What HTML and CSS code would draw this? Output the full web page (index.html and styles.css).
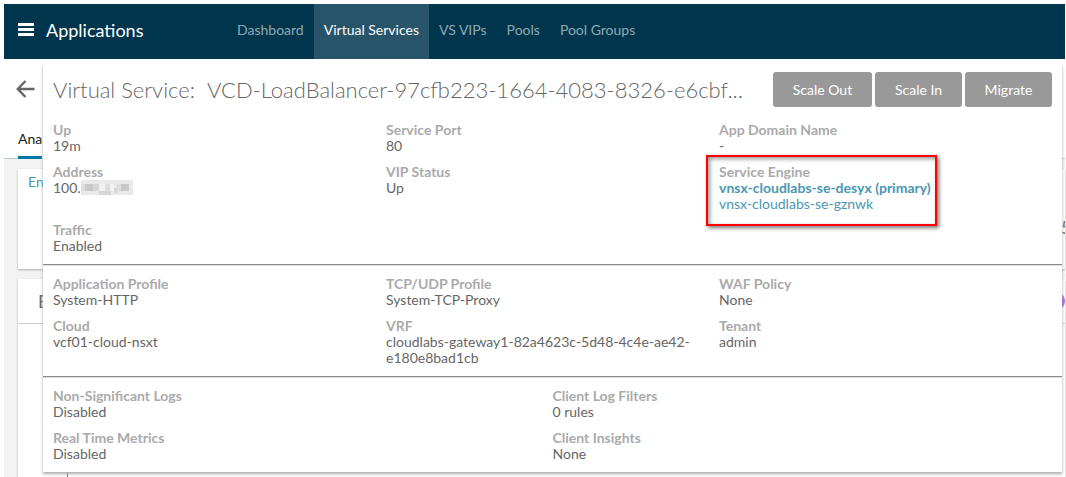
FILE: index.html
```html
<!DOCTYPE html>
<html lang="en">
<head>
<meta charset="utf-8">
<title>Applications</title>
<link rel="stylesheet" href="styles.css">
</head>
<body>
<div class="app">
  <header class="topbar">
    <button class="menu" aria-label="Menu">
      <svg width="16" height="13" viewBox="0 0 16 13" fill="#fff"><path d="M0 0h16v3H0zM0 5h16v3H0zM0 10h16v3H0z"/></svg>
    </button>
    <h1 class="brand">Applications</h1>
    <nav class="nav">
      <a class="nav-link" href="#">Dashboard</a>
      <a class="nav-link active" href="#">Virtual Services</a>
      <a class="nav-link" href="#">VS VIPs</a>
      <a class="nav-link" href="#">Pools</a>
      <a class="nav-link" href="#">Pool Groups</a>
    </nav>
  </header>

  <div class="page">
    <div class="page-head">
      <button class="back" aria-label="Back">
        <svg width="19" height="18" viewBox="0 0 19 18" fill="none" stroke="#666" stroke-width="2.400"><path d="M18.500 9H2M9.500 1L1.800 9l7.700 8"/></svg>
      </button>
      <div class="tabs"><a class="tab" href="#">Ana</a></div>
    </div>
    <main class="cards">
      <section class="card timing">
        <a class="card-link" href="#">En</a>
        <span class="metric">5</span>
      </section>
      <section class="card chart">
        <div class="chart-head"><span>E</span><span class="dot"></span></div>
        <div class="plot"></div>
      </section>
    </main>

    <div class="popup">
      <div class="popup-head">
        <h2 class="title"><span>Virtual Service:</span><span>VCD-LoadBalancer-97cfb223-1664-4083-8326-e6cbf...</span></h2>
        <div class="actions">
          <button class="btn wide">Scale Out</button>
          <button class="btn">Scale In</button>
          <button class="btn">Migrate</button>
        </div>
      </div>
      <dl class="group">
        <div class="field"><dt>Up</dt><dd>19m</dd></div>
        <div class="field"><dt>Service Port</dt><dd>80</dd></div>
        <div class="field"><dt>App Domain Name</dt><dd>-</dd></div>
        <div class="field"><dt>Address</dt><dd class="address">100.<svg width="52" height="15" viewBox="0 0 52 15" shape-rendering="crispEdges"><path fill="#e9e9e9" d="M0 0h52v15H0z"/><path fill="#c9c9c9" d="M4 4h8v7H4zM40 4h8v7h-8z"/><path fill="#d6d6d6" d="M12 4h6v7h-6zM18 11h12v4H18zM33 8h4v5h-4z"/><path fill="#dedede" d="M0 4h4v7H0zM24 4h5v7h-5zM36 4h4v7h-4z"/><path fill="#f2f2f2" d="M18 4h6v7h-6zM29 4h4v7h-4z"/></svg></dd></div>
        <div class="field"><dt>VIP Status</dt><dd>Up</dd></div>
        <div class="field"><div class="marked"><dt>Service Engine</dt><dd><a class="primary" href="#">vnsx-cloudlabs-se-desyx (primary)</a></dd><dd><a href="#">vnsx-cloudlabs-se-gznwk</a></dd></div></div>
        <div class="field"><dt>Traffic</dt><dd>Enabled</dd></div>
      </dl>
      <dl class="group">
        <div class="field"><dt>Application Profile</dt><dd>System-HTTP</dd></div>
        <div class="field"><dt>TCP/UDP Profile</dt><dd>System-TCP-Proxy</dd></div>
        <div class="field"><dt>WAF Policy</dt><dd>None</dd></div>
        <div class="field"><dt>Cloud</dt><dd>vcf01-cloud-nsxt</dd></div>
        <div class="field"><dt>VRF</dt><dd>cloudlabs-gateway1-82a4623c-5d48-4c4e-ae42-e180e8bad1cb</dd></div>
        <div class="field"><dt>Tenant</dt><dd>admin</dd></div>
      </dl>
      <dl class="group halves">
        <div class="field"><dt>Non-Significant Logs</dt><dd>Disabled</dd></div>
        <div class="field"><dt>Client Log Filters</dt><dd>0 rules</dd></div>
        <div class="field"><dt>Real Time Metrics</dt><dd>Disabled</dd></div>
        <div class="field"><dt>Client Insights</dt><dd>None</dd></div>
      </dl>
    </div>
  </div>
</div>
</body>
</html>
```
FILE: styles.css
```css
* { box-sizing: border-box; }
html, body { height: 100%; }
body {
  margin: 0;
  background: #fff;
  color: #666;
  font: 14px/16px Lato, "Open Sans", sans-serif;
}
h1, h2, dl, dd { margin: 0; font-weight: 400; }
button { border: 0; padding: 0; background: none; font: inherit; cursor: pointer; }
a { color: #4a97b2; text-decoration: none; }
svg { display: block; }

.app {
  display: flex;
  flex-direction: column;
  height: 100%;
  padding: 4px 1px 0 4px;
  overflow: hidden;
}

.topbar {
  display: flex;
  align-items: stretch;
  flex: none;
  min-height: 55px;
  padding: 0 14px 4px;
  background: #00364d;
}
.menu { align-self: center; }
.brand { align-self: center; width: 181px; margin-left: 12px; color: #fff; font-size: 18px; line-height: 24px; }
.nav { display: flex; margin-bottom: -4px; }
.nav-link { display: flex; align-items: center; padding: 0 10px 4px; color: #90a9b4; }
.nav-link.active { background: #285469; color: #fff; }

.page { position: relative; display: flex; flex-direction: column; flex: 1; }
.page-head { border-bottom: 1px solid #b9cbcb; }
.back { display: block; margin: 21px 0 0 12px; }
.tabs { display: flex; padding: 31px 14px 0; }
.tab { padding: 2px 0 9px; margin-bottom: -1px; border-bottom: 3px solid #0077a8; color: #222; }

.cards { display: flex; flex-direction: column; flex: 1; gap: 10px; padding: 10px 0 0 14px; background: #f3f3f3; }
.card { background: #fff; box-shadow: 0 1px 2px #aaa; }
.timing { display: flex; justify-content: space-between; height: 100px; padding: 5px 0 0 10px; }
.metric { width: 4px; overflow: hidden; margin-top: 43px; font-size: 18px; line-height: 20px; }
.chart { flex: 1; display: flex; flex-direction: column; }
.chart-head { display: flex; align-items: center; justify-content: space-between; height: 45px; padding-left: 20px; border-bottom: 1px solid #ccc; font-size: 18px; }
.dot { width: 20px; height: 20px; border-radius: 10px; background: #a66ae0; }
.plot { flex: 1; margin-left: 49px; border-left: 1px solid #777; }

.popup {
  position: absolute;
  top: 5px;
  left: 39px;
  right: 3px;
  background: #fff;
  box-shadow: 0 2px 3px #aaa;
}
.popup-head { display: flex; align-items: center; justify-content: space-between; gap: 10px; padding: 8px 10px 5px; }
.title { display: flex; gap: 12px; min-width: 0; font-size: 22px; line-height: 30px; font-weight: 300; white-space: nowrap; }
.actions { display: flex; gap: 3px; }
.btn { width: 87px; height: 35px; border-radius: 3px; background: #999; color: #fff; }
.btn.wide { width: 99px; }

.group { display: grid; grid-template-columns: repeat(3, 1fr); padding: 10px 10px 0; }
.group + .group { padding-top: 11px; border-top: 1px solid #8c8c8c; box-shadow: inset 0 1px #ddd; }
.group.halves { grid-template-columns: repeat(2, 1fr); }
.field { padding: 0 20px 10px 0; }
dt { color: #aaa; font-weight: 700; }
.address { display: flex; }
.primary { font-weight: 700; }
.marked { position: relative; display: inline-block; vertical-align: top; white-space: nowrap; }
.marked::after {
  content: "";
  position: absolute;
  inset: -9px -6px -14px -13px;
  border: 2px solid #f00;
  box-shadow: 2px 2px 4px #777, inset 2px 2px 4px #999;
  pointer-events: none;
}
```
